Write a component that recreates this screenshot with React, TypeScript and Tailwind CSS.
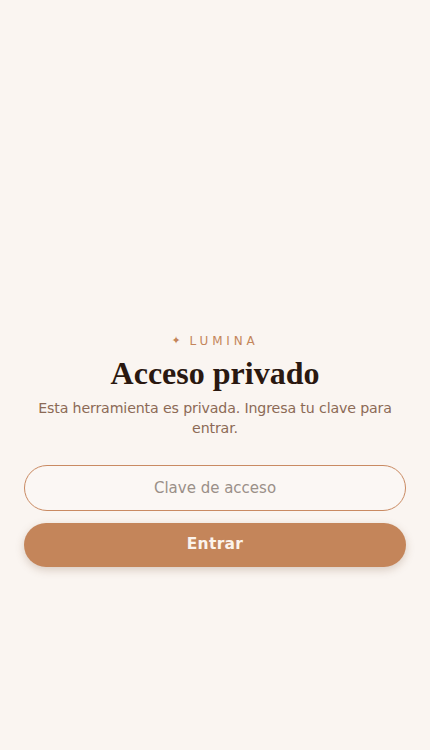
const App = () => {
  return (
    <div className="min-h-screen w-full bg-[#faf5f1] flex flex-col items-center px-6 pt-[332px]" style={{ fontFamily: "'DejaVu Sans', 'Open Sans', sans-serif" }}>
      <div className="w-full flex flex-col items-center">
        {/* Brand */}
        <div className="flex items-center gap-[9px] text-[#c4855a] text-[12px] tracking-[0.32em] font-medium">
          <span className="text-[11px] tracking-normal">✦</span>
          <span>LUMINA</span>
        </div>

        <h1
          className="mt-[4px] text-[#2a1810] text-[32px] leading-[38px] font-bold"
          style={{ fontFamily: "'Liberation Serif', 'DejaVu Serif', serif" }}
        >
          Acceso privado
        </h1>

        <p className="mt-[6px] text-center text-[#8c6a56] text-[14.2px] leading-[20px] tracking-[-0.01em]">
          Esta herramienta es privada. Ingresa tu clave para entrar.
        </p>

        {/* Form */}
        <form className="w-full mt-[27px] flex flex-col gap-[12px]" onSubmit={(e) => e.preventDefault()}>
          <input
            type="password"
            placeholder="Clave de acceso"
            className="w-full h-[46px] rounded-full border border-[#c98a62] bg-[#fbf7f4] text-center text-[15px] text-[#3a2a20] placeholder:text-[#9a8f88] outline-none"
          />
          <button
            type="submit"
            className="w-full h-[44px] rounded-full bg-[#c4855a] text-[#fbf3ec] text-[15.5px] font-semibold tracking-[0.02em] shadow-[0_3px_8px_rgba(120,80,50,0.25)]"
          >
            Entrar
          </button>
        </form>
      </div>
    </div>
  );
};

export default App;
